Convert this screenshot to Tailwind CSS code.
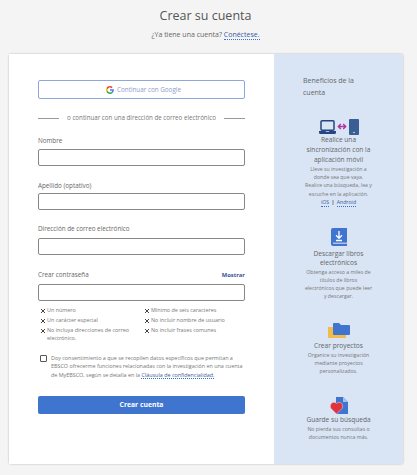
<!DOCTYPE html>
<html lang="es">
<head>
<meta charset="UTF-8">
<title>Crear su cuenta</title>
<script src="https://cdn.jsdelivr.net/npm/@tailwindcss/browser@4"></script>
</head>
<body class="bg-[#f4f4f4] w-[417px] h-[475px] overflow-hidden font-['Open_Sans',sans-serif] text-[#555]">

  <header class="h-[54px] pr-[6px] text-center">
    <h1 class="pt-[7px] text-[12.5px] leading-[18px] text-[#555]">Crear su cuenta</h1>
    <p class="mt-[5px] text-[7px] leading-[10px] text-[#666]">¿Ya tiene una cuenta? <a class="text-[#3a5a9a] border-b border-dotted border-[#3a6fd0]">Conéctese.</a></p>
  </header>

  <main class="ml-[9px] w-[394px] h-[410px] flex rounded-[2px] shadow-[0_0_2px_rgba(0,0,0,0.3)]">
    <form class="w-[265px] bg-white pl-[29px] pr-[29px] pt-[26px]">
      <button type="button" class="w-[207px] h-[19px] pl-[4px] flex items-center justify-center gap-[3px] bg-white border border-[#8fa8dc] rounded-[2px] text-[6.3px] text-[#8a9ccb]">
        <svg width="8" height="8" viewBox="0 0 48 48">
          <path fill="#EA4335" d="M24 9.5c3.5 0 6.7 1.2 9.2 3.6l6.9-6.9C35.9 2.4 30.500 0 24 0 14.600 0 6.500 5.400 2.600 13.200l8 6.200C12.500 13.600 17.800 9.500 24 9.500z"/>
          <path fill="#4285F4" d="M46.900 24.500c0-1.600-.1-3.100-.4-4.500H24v9h12.900c-.6 3-2.200 5.500-4.700 7.200l7.700 6c4.500-4.200 7-10.300 7-17.700z"/>
          <path fill="#FBBC05" d="M10.500 28.600c-.5-1.400-.8-3-.8-4.600s.3-3.200.8-4.600l-8-6.200C.9 16.500 0 20.100 0 24s.9 7.500 2.600 10.800l7.900-6.200z"/>
          <path fill="#34A853" d="M24 48c6.500 0 11.900-2.100 15.900-5.800l-7.700-6c-2.200 1.500-4.900 2.300-8.200 2.300-6.200 0-11.500-4.100-13.400-9.900l-8 6.200C6.500 42.600 14.600 48 24 48z"/>
        </svg>
        Continuar con Google
      </button>

      <div class="mt-[14px] flex items-center justify-between text-[6.2px] leading-[10px] text-[#777]">
        <span class="w-[21px] h-[1px] bg-[#999]"></span>
        <span>o continuar con una dirección de correo electrónico</span>
        <span class="w-[21px] h-[1px] bg-[#999]"></span>
      </div>

      <label class="block mt-[13px] text-[6.3px] leading-[10px] font-medium text-[#666]">Nombre</label>
      <input type="text" class="block mt-[3px] w-[207px] h-[17px] bg-white border border-[#888] rounded-[2px]">

      <label class="block mt-[15px] text-[6.3px] leading-[10px] font-medium text-[#666]">Apellido (optativo)</label>
      <input type="text" class="block mt-[2px] w-[207px] h-[17px] bg-white border border-[#888] rounded-[2px]">

      <label class="block mt-[14px] text-[6.3px] leading-[10px] font-medium text-[#666]">Dirección de correo electrónico</label>
      <input type="text" class="block mt-[4px] w-[207px] h-[17px] bg-white border border-[#888] rounded-[2px]">

      <div class="mt-[15px] flex justify-between text-[6.3px] leading-[10px] font-medium text-[#666]">
        <label>Crear contraseña</label>
        <a class="text-[#3a5298] text-[5.8px] font-bold">Mostrar</a>
      </div>
      <input type="text" class="block mt-[4px] w-[207px] h-[17px] bg-white border border-[#888] rounded-[2px]">

      <ul class="mt-[6px] pl-[3px] grid grid-cols-[104px_1fr] text-[5.4px] leading-[7.5px] text-[#777]">
        <li class="flex gap-[2px] h-[10px]"><svg class="shrink-0 mt-[2px]" width="4" height="4" viewBox="0 0 4 4"><path stroke="#444" stroke-width="1" d="M0 0l4 4M4 0L0 4"/></svg>Un número</li>
        <li class="flex gap-[2px] h-[10px]"><svg class="shrink-0 mt-[2px]" width="4" height="4" viewBox="0 0 4 4"><path stroke="#444" stroke-width="1" d="M0 0l4 4M4 0L0 4"/></svg>Mínimo de seis caracteres</li>
        <li class="flex gap-[2px] h-[10px]"><svg class="shrink-0 mt-[2px]" width="4" height="4" viewBox="0 0 4 4"><path stroke="#444" stroke-width="1" d="M0 0l4 4M4 0L0 4"/></svg>Un carácter especial</li>
        <li class="flex gap-[2px] h-[10px]"><svg class="shrink-0 mt-[2px]" width="4" height="4" viewBox="0 0 4 4"><path stroke="#444" stroke-width="1" d="M0 0l4 4M4 0L0 4"/></svg>No incluir nombre de usuario</li>
        <li class="flex gap-[2px] pr-[8px]"><svg class="shrink-0 mt-[2px]" width="4" height="4" viewBox="0 0 4 4"><path stroke="#444" stroke-width="1" d="M0 0l4 4M4 0L0 4"/></svg><span>No incluya direcciones de correo electrónico.</span></li>
        <li class="flex gap-[2px]"><svg class="shrink-0 mt-[2px]" width="4" height="4" viewBox="0 0 4 4"><path stroke="#444" stroke-width="1" d="M0 0l4 4M4 0L0 4"/></svg>No incluir frases comunes</li>
      </ul>

      <div class="mt-[12px] pl-[2px] flex gap-[4px]">
        <span class="shrink-0 mt-[1px] w-[7px] h-[7px] bg-white border border-[#555] rounded-[1px]"></span>
        <p class="text-[5.4px] leading-[8.4px] text-[#777]">Doy consentimiento a que se recopilen datos específicos que permitan a EBSCO ofrecerme funciones relacionadas con la investigación en una cuenta de MyEBSCO, según se detalla en la <a class="text-[#3a5a9a] underline decoration-dotted decoration-[#3a6fd0]">Cláusula de confidencialidad.</a></p>
      </div>

      <button type="button" class="mt-[17px] w-[207px] h-[18px] bg-[#3f74cf] rounded-[2px] text-white text-[6.8px] font-bold">Crear cuenta</button>
    </form>

    <aside class="w-[129px] bg-[#d9e4f5] rounded-r-[3px] text-center">
      <h2 class="mt-[21px] ml-[29px] text-left text-[7px] leading-[12px] text-[#666]">Beneficios de la<br>cuenta</h2>

      <section class="mt-[19px] px-[29px]">
        <div class="h-[17px] flex items-center justify-center">
          <svg width="17" height="14" viewBox="0 0 17 14">
            <rect x="2" y="0.800" width="13" height="9.500" rx="1" fill="none" stroke="#24457f" stroke-width="1.500"/>
            <path fill="#24457f" d="M0 11h6.500l.5.800h3l.5-.8H17v1.500a1.500 1.500 0 0 1-1.500 1.500h-14A1.500 1.500 0 0 1 0 12.500z"/>
          </svg>
          <svg class="ml-[1px] mr-[2px]" width="10" height="7" viewBox="0 0 10 7">
            <path fill="none" stroke="#b0359b" stroke-width="1.400" d="M2 3.500h6M3.800 1L1.300 3.500 3.800 6M6.200 1l2.500 2.500L6.200 6"/>
          </svg>
          <svg width="10" height="16" viewBox="0 0 10 16">
            <rect width="10" height="16" rx="1" fill="#3a5d94"/>
            <circle cx="5" cy="13.500" r="0.800" fill="#d9e4f5"/>
          </svg>
        </div>
        <h3 class="text-[6.6px] leading-[10px] text-[#666]">Realice una sincronización con la aplicación móvil</h3>
        <p class="text-[5.2px] leading-[8.2px] text-[#777]">Lleve su investigación a<br>donde sea que vaya.<br>Realice una búsqueda, lea y<br>escuche en la aplicación.</p>
        <p class="text-[5.2px] leading-[9px] text-[#3a5a9a]"><a class="border-b border-dotted border-[#3a6fd0]">iOS</a> <span class="mx-[1px] font-bold text-[#333]">|</span> <a class="border-b border-dotted border-[#3a6fd0]">Android</a></p>
      </section>

      <section class="mt-[21px] px-[29px]">
        <svg class="mx-auto" width="16" height="18" viewBox="0 0 16 18">
          <path fill="#3f74cf" d="M2 0h14v18H2a2 2 0 0 1-2-2V2a2 2 0 0 1 2-2z"/>
          <path fill="#a9c0e8" d="M2 14.500h14v1.500H2z"/>
          <path fill="none" stroke="#fff" stroke-width="1.300" d="M8 3v7M5 7.300l3 3 3-3M5 12.500h6"/>
        </svg>
        <h3 class="mt-[3px] text-[6.6px] leading-[9.500px] text-[#666]">Descargar libros electrónicos</h3>
        <p class="text-[5.2px] leading-[8px] text-[#777]">Obtenga acceso a miles de<br>títulos de libros<br>electrónicos que puede leer<br>y descargar.</p>
      </section>

      <section class="mt-[22px] px-[29px]">
        <svg class="mx-auto" width="22" height="17" viewBox="0 0 22 17">
          <path fill="#f2bb4c" d="M0 5h5v7h13v4H1a1 1 0 0 1-1-1z"/>
          <path fill="#3f74cf" d="M5 2a1 1 0 0 1 1-1h5l2 2h8a1 1 0 0 1 1 1v8a1 1 0 0 1-1 1H6a1 1 0 0 1-1-1z"/>
        </svg>
        <h3 class="mt-[2px] text-[6.6px] leading-[10px] text-[#666]">Crear proyectos</h3>
        <p class="text-[5.2px] leading-[8px] text-[#777]">Organice su investigación mediante proyectos personalizados.</p>
      </section>

      <section class="mt-[22px] px-[29px]">
        <svg class="mx-auto" width="18" height="17" viewBox="0 0 18 17">
          <path fill="#3f74cf" d="M6 0h7l5 5v12H6z"/>
          <path fill="#a9c0e8" d="M13 0l5 5h-5z"/>
          <path fill="#e0343c" stroke="#d9e4f5" stroke-width="0.500" d="M6.500 17 1 11.500C-1.500 8 3 3 6.500 6.500 10 3 14.500 8 12 11.500z"/>
        </svg>
        <h3 class="mt-[1px] -mx-[3px] text-[6.6px] leading-[10px] text-[#666]">Guarde su búsqueda</h3>
        <p class="text-[5.2px] leading-[8px] text-[#777]">No pierda sus consultas o documentos nunca más.</p>
      </section>
    </aside>
  </main>
</body>
</html>
